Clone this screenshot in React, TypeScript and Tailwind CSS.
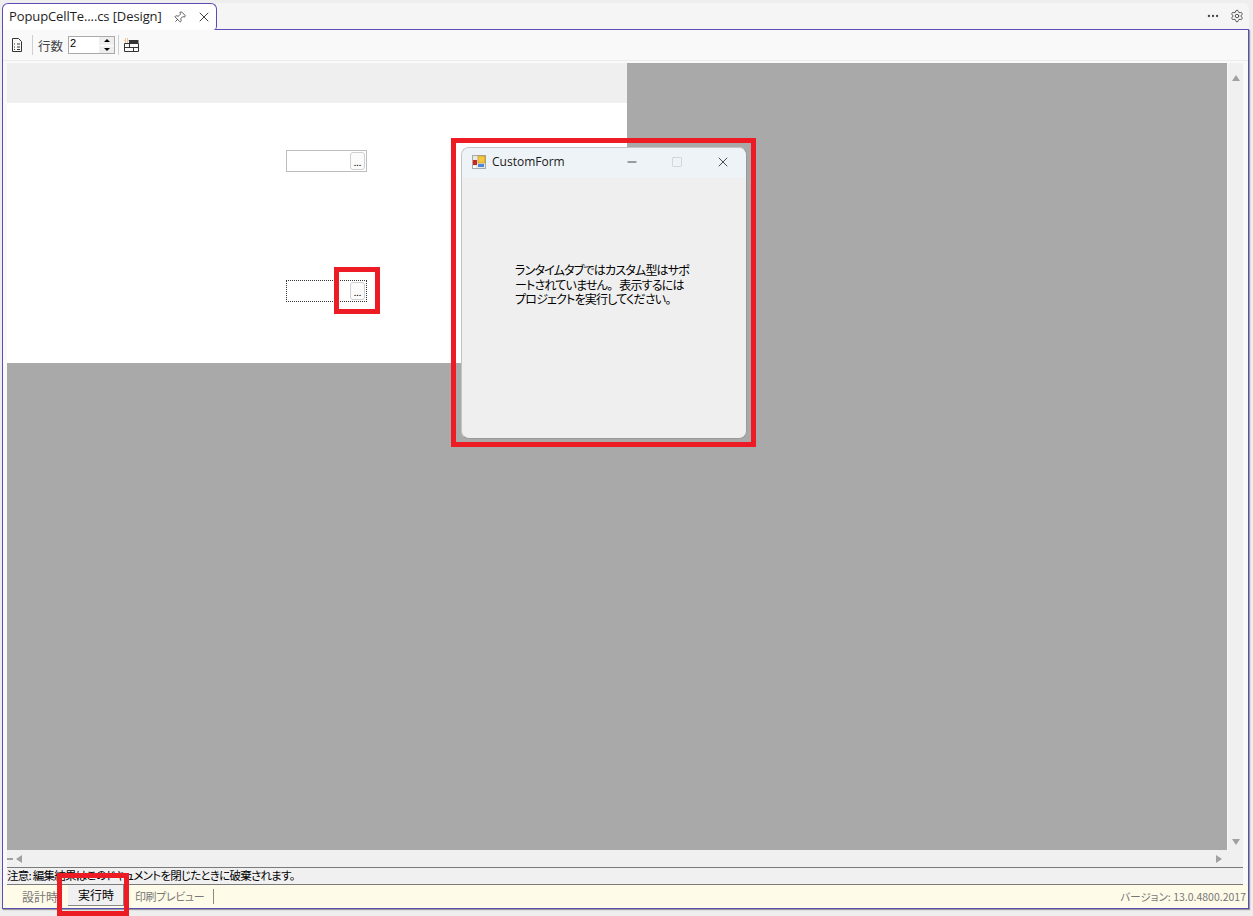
import { X, Pin, Settings, Minus, Square, Ellipsis } from 'lucide-react';

const cjk = "font-['Noto_Sans_CJK_JP','Noto_Sans',sans-serif]";

function CellBox({ dotted }: { dotted?: boolean }) {
  return (
    <div
      className={`flex h-[22px] w-[81px] items-center justify-end pr-[1px] ${
        dotted ? 'border border-dotted border-[#333]' : 'border border-[#bdbdbd]'
      }`}
    >
      <div className="flex h-[18px] w-[15px] items-end justify-center rounded-[3px] border border-[#d0d0d0] bg-[#fbfbfb] pb-[2px] text-[9px] leading-[9px] text-black">
        ...
      </div>
    </div>
  );
}

function FormIcon() {
  return (
    <svg width="14" height="14" viewBox="0 0 14 14">
      <rect x="0.5" y="0.5" width="13" height="13" fill="#e8e8e8" stroke="#a8a8a8" />
      <rect x="6" y="1" width="7" height="7" fill="#f5c842" stroke="#b98a1c" strokeWidth="0.6" />
      <rect x="1" y="5" width="4" height="5" fill="#c8281e" />
      <rect x="6" y="9" width="6" height="3" fill="#4f86d8" />
      <rect x="1" y="11" width="3" height="2" fill="#fff" />
    </svg>
  );
}

export default function App() {
  return (
    <div className={`relative flex h-[916px] w-[1253px] flex-col overflow-hidden bg-[#eeeeee] pl-[2px] pr-[4px] pt-[3px] pb-[7px] ${cjk} [font-feature-settings:'palt']`}>
      {/* tab strip */}
      <div className="flex h-[26px] shrink-0 items-stretch rounded-t-[6px] bg-[#f5f5f5]">
        <div className="z-10 -mb-[1px] flex w-[215px] items-center rounded-t-[6px] rounded-br-[4px] border border-b-0 border-[#5b4db5] bg-white pl-[6px] text-[13px] text-[#1f1f1f]">
          <span className="font-['Open_Sans',sans-serif] tracking-[-0.1px]">PopupCellTe....cs [Design]</span>
          <Pin size={13} strokeWidth={1.4} className="ml-[11px] rotate-45 text-[#333]" />
          <X size={16} strokeWidth={1.3} className="ml-[10px] text-[#222]" />
        </div>
        <div className="ml-auto flex items-center gap-[10px] pr-[5px] text-[#444]">
          <Ellipsis size={14} />
          <Settings size={14} strokeWidth={1.5} />
        </div>
      </div>

      {/* document */}
      <div className="flex min-h-0 flex-1 flex-col border border-[#5b4db5] shadow-[1px_1px_1px_#9a9a9a]">
        {/* toolbar */}
        <div className="flex h-[31px] shrink-0 items-center border-b border-[#ececec] bg-[#f9f9f9] pl-[8px] text-[12.5px] text-[#444]">
          <svg width="12" height="14" viewBox="0 0 12 14" fill="none" stroke="#333">
            <path d="M1.5.5h6l3 3v10h-9z" />
            <path d="M3 6h1M6 6h3M3 9h1M6 9h3M3 11.5h1M6 11.5h3" />
          </svg>
          <div className="ml-[9px] h-[20px] w-px bg-[#cfcfcf]" />
          <span className="ml-[5px] pt-[2px]">行数</span>
          <div className="ml-[5px] flex h-[18px] w-[47px] items-start justify-between border border-[#aaa] bg-white pl-[1px]">
            <span className="font-['Liberation_Sans',sans-serif] text-[11px] leading-[12px] text-black">2</span>
            <div className="flex h-full w-[15px] flex-col gap-px bg-white">
              <span className="flex flex-1 items-center justify-center bg-[#eee]">
                <span className="h-0 w-0 border-x-[3px] border-b-[3px] border-x-transparent border-b-black" />
              </span>
              <span className="flex flex-1 items-center justify-center bg-[#eee]">
                <span className="h-0 w-0 border-x-[3px] border-t-[3px] border-x-transparent border-t-black" />
              </span>
            </div>
          </div>
          <div className="ml-[3px] h-[20px] w-px bg-[#cfcfcf]" />
          <svg className="ml-[5px]" width="15" height="14" viewBox="0 0 15 14" fill="none" stroke="#333">
            <path d="M.5 5.5h14v8H.5zM.5 9.5h14M5.5 5.5v4M9.5 9.5v4" />
            <rect x="5" y="2" width="9.5" height="3" fill="#333" stroke="none" />
            <path d="M1 1h3v3H1z" stroke="#d9963a" strokeDasharray="1 1" />
          </svg>
        </div>

        {/* designer */}
        <div className="flex min-h-0 flex-1 flex-col bg-[#f9f9f9] pl-[4px] pr-[5px] pt-[2px]">
          <div className="flex min-h-0 flex-1">
            <div className="min-w-0 flex-1 bg-[#a9a9a9]">
              <div className="w-[620px]">
                <div className="h-[40px] bg-[#efefef]" />
                <div className="flex h-[260px] flex-col bg-white pl-[279px] pt-[47px]">
                  <CellBox />
                  <div className="mt-[108px]">
                    <CellBox dotted />
                  </div>
                </div>
              </div>
            </div>
            <div className="flex w-[16px] shrink-0 flex-col items-center justify-between border-l border-[#f8f8f8] bg-[#f0f0f0] pb-[5px] pt-[12px]">
              <span className="h-0 w-0 border-x-[4px] border-b-[6px] border-x-transparent border-b-[#a0a0a0]" />
              <span className="h-0 w-0 border-x-[4px] border-t-[6px] border-x-transparent border-t-[#a0a0a0]" />
            </div>
          </div>
          <div className="flex h-[18px] shrink-0 items-center border-b border-[#7a7a7a] bg-[#f0f0f0] pr-[21px]">
            <span className="h-[2px] w-[6px] bg-[#a0a0a0]" />
            <span className="ml-[3px] h-0 w-0 border-y-[4px] border-r-[6px] border-y-transparent border-r-[#a0a0a0]" />
            <span className="ml-auto h-0 w-0 border-y-[4px] border-l-[6px] border-y-transparent border-l-[#a0a0a0]" />
          </div>
          <div className="h-[17px] shrink-0 border-b border-[#7a7a7a] bg-[#f0f0f0] pl-0 text-[11.5px] leading-[14px] tracking-[-0.75px] text-black">
            注意: 編集結果はこのドキュメントを閉じたときに破棄されます。
          </div>
        </div>

        {/* design / runtime / preview tabs */}
        <div className="flex h-[23px] shrink-0 items-center bg-[#fffbe9] text-[12px] text-[#777]">
          <span className="ml-[19px] w-[46px]">設計時</span>
          <span className="flex h-[21px] w-[56px] items-center justify-center self-start border-b border-r border-[#888] bg-[#f0f0f0] pl-[1px] text-black">
            実行時
          </span>
          <span className="ml-[11px] text-[11px] tracking-[-0.4px]">印刷プレビュー</span>
          <span className="ml-[9px] h-[15px] w-px bg-[#888]" />
          <span className="ml-auto pr-[2px] text-[10.5px]">バージョン: 13.0.4800.2017</span>
        </div>
      </div>

      {/* floating form window */}
      <div className="absolute left-[461px] top-[147px] flex h-[292px] w-[286px] flex-col overflow-hidden rounded-[8px] border border-[#c4c4c4] border-b-[#999] border-r-[#999] bg-[#efefef]">
        <div className="flex h-[30px] shrink-0 items-center bg-[#eef3f7] pb-[2px] pl-[10px] text-[12px] text-[#1a1a1a]">
          <FormIcon />
          <span className="ml-[6px] font-['Open_Sans',sans-serif]">CustomForm</span>
          <Minus size={14} strokeWidth={1.3} className="ml-[60px] text-[#111]" />
          <Square size={12} strokeWidth={1} className="ml-[32px] text-[#bbb]" />
          <X size={16} strokeWidth={1.2} className="ml-[32px] text-[#222]" />
        </div>
        <p className="ml-[53px] mt-[85px] whitespace-nowrap text-[12px] leading-[14.5px] tracking-[-0.8px] text-black">
          ランタイムタブではカスタム型はサポ
          <br />
          ートされていません<span className="mr-[7px]">。</span>表示するには
          <br />
          プロジェクトを実行してください。
        </p>
      </div>

      {/* red callouts */}
      <div className="absolute left-[451px] top-[138px] h-[309px] w-[305px] border-[5px] border-[#ed1c24]" />
      <div className="absolute left-[334px] top-[267px] h-[47px] w-[46px] border-[5px] border-[#ed1c24]" />
      <div className="absolute left-[57px] top-[873px] h-[43px] w-[72px] border-[5px] border-[#ed1c24]" />
    </div>
  );
}
